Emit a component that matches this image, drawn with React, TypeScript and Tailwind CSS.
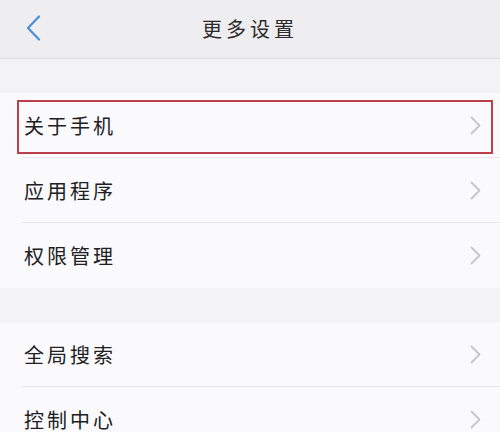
const groups: { label: string; active?: boolean }[][] = [
  [{ label: '关于手机', active: true }, { label: '应用程序' }, { label: '权限管理' }],
  [{ label: '全局搜索' }, { label: '控制中心' }],
]

function Row({ label, active, last }: { label: string; active?: boolean; last?: boolean }) {
  return (
    <div className="relative flex h-[65px] items-center bg-[#fafafc] pl-[24px] pr-[19px]">
      <span className="flex-1 text-[20px] tracking-[3px] text-[#202023]">{label}</span>
      <svg width="11" height="19" viewBox="0 0 11 19" fill="none">
        <path d="M1.5 1.5 L9.5 9.5 L1.5 17.5" stroke="#c6c6ca" strokeWidth="1.8" strokeLinecap="round" strokeLinejoin="round" />
      </svg>
      {!last && <div className="absolute bottom-0 left-[22px] right-0 h-px bg-[#e6e6e9]" />}
      {active && (
        <div className="absolute left-[17px] right-[7px] top-[7px] bottom-[4px] border-2 border-[#bd3f4c]" />
      )}
    </div>
  )
}

export default function App() {
  return (
    <div
      className="h-[432px] w-[500px] overflow-hidden bg-[#f3f3f5]"
      style={{ fontFamily: '"Noto Sans CJK SC", sans-serif' }}
    >
      <header className="relative flex h-[59px] items-center justify-center border-b border-[#dcdcdf] bg-[#eeeef0]">
        <svg className="absolute left-[25px] top-[15px]" width="16" height="26" viewBox="0 0 16 26" fill="none">
          <path d="M14 1.5 L3 13 L14 24.5" stroke="#4a8fd4" strokeWidth="2.2" strokeLinecap="round" strokeLinejoin="round" />
        </svg>
        <h1 className="text-[20px] tracking-[4px] text-[#2a2a2d]">更多设置</h1>
      </header>

      {groups.map((group, gi) => (
        <section key={gi} className="mt-[34px]">
          {group.map((item, i) => (
            <Row key={item.label} label={item.label} active={item.active} last={i === group.length - 1} />
          ))}
        </section>
      ))}
    </div>
  )
}
